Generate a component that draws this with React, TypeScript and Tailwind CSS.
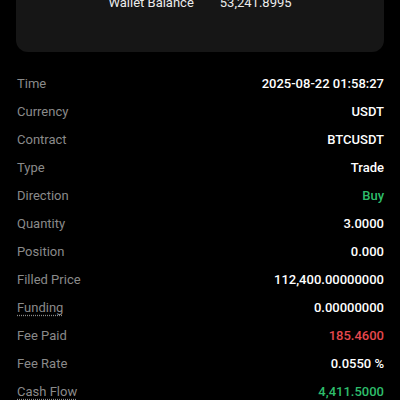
import React from 'react';

type Row = {
  label: string;
  value: string;
  color?: string;
  dotted?: boolean;
};

const rows: Row[] = [
  { label: 'Time', value: '2025-08-22 01:58:27' },
  { label: 'Currency', value: 'USDT' },
  { label: 'Contract', value: 'BTCUSDT' },
  { label: 'Type', value: 'Trade' },
  { label: 'Direction', value: 'Buy', color: 'text-[#2ebd6b]' },
  { label: 'Quantity', value: '3.0000' },
  { label: 'Position', value: '0.000' },
  { label: 'Filled Price', value: '112,400.00000000' },
  { label: 'Funding', value: '0.00000000', dotted: true },
  { label: 'Fee Paid', value: '185.4600', color: 'text-[#e5484d]' },
  { label: 'Fee Rate', value: '0.0550 %' },
  { label: 'Cash Flow', value: '4,411.5000', color: 'text-[#2ebd6b]', dotted: true },
];

export default function App() {
  return (
    <div
      className="w-[400px] h-[400px] overflow-hidden bg-black text-white"
      style={{ fontFamily: 'Roboto, "Noto Sans", sans-serif' }}
    >
      <div className="mx-4 -mt-[20px] h-[72px] rounded-xl bg-[#161616] pt-[13px]">
        <div className="flex justify-center gap-[26px] text-[13px] leading-5 text-[#ececec]">
          <span>Wallet Balance</span>
          <span>53,241.8995</span>
        </div>
      </div>

      <div className="mt-[18px] pl-[17px] pr-4">
        {rows.map((r) => (
          <div key={r.label} className="flex h-[28px] items-center justify-between">
            <span
              className={
                'text-[13px] text-[#8a8a8a] ' +
                (r.dotted ? 'underline decoration-dotted decoration-[#8a8a8a] underline-offset-[3px]' : '')
              }
            >
              {r.label}
            </span>
            <span className={'text-[13px] font-medium ' + (r.color ?? 'text-white')}>{r.value}</span>
          </div>
        ))}
      </div>
    </div>
  );
}
